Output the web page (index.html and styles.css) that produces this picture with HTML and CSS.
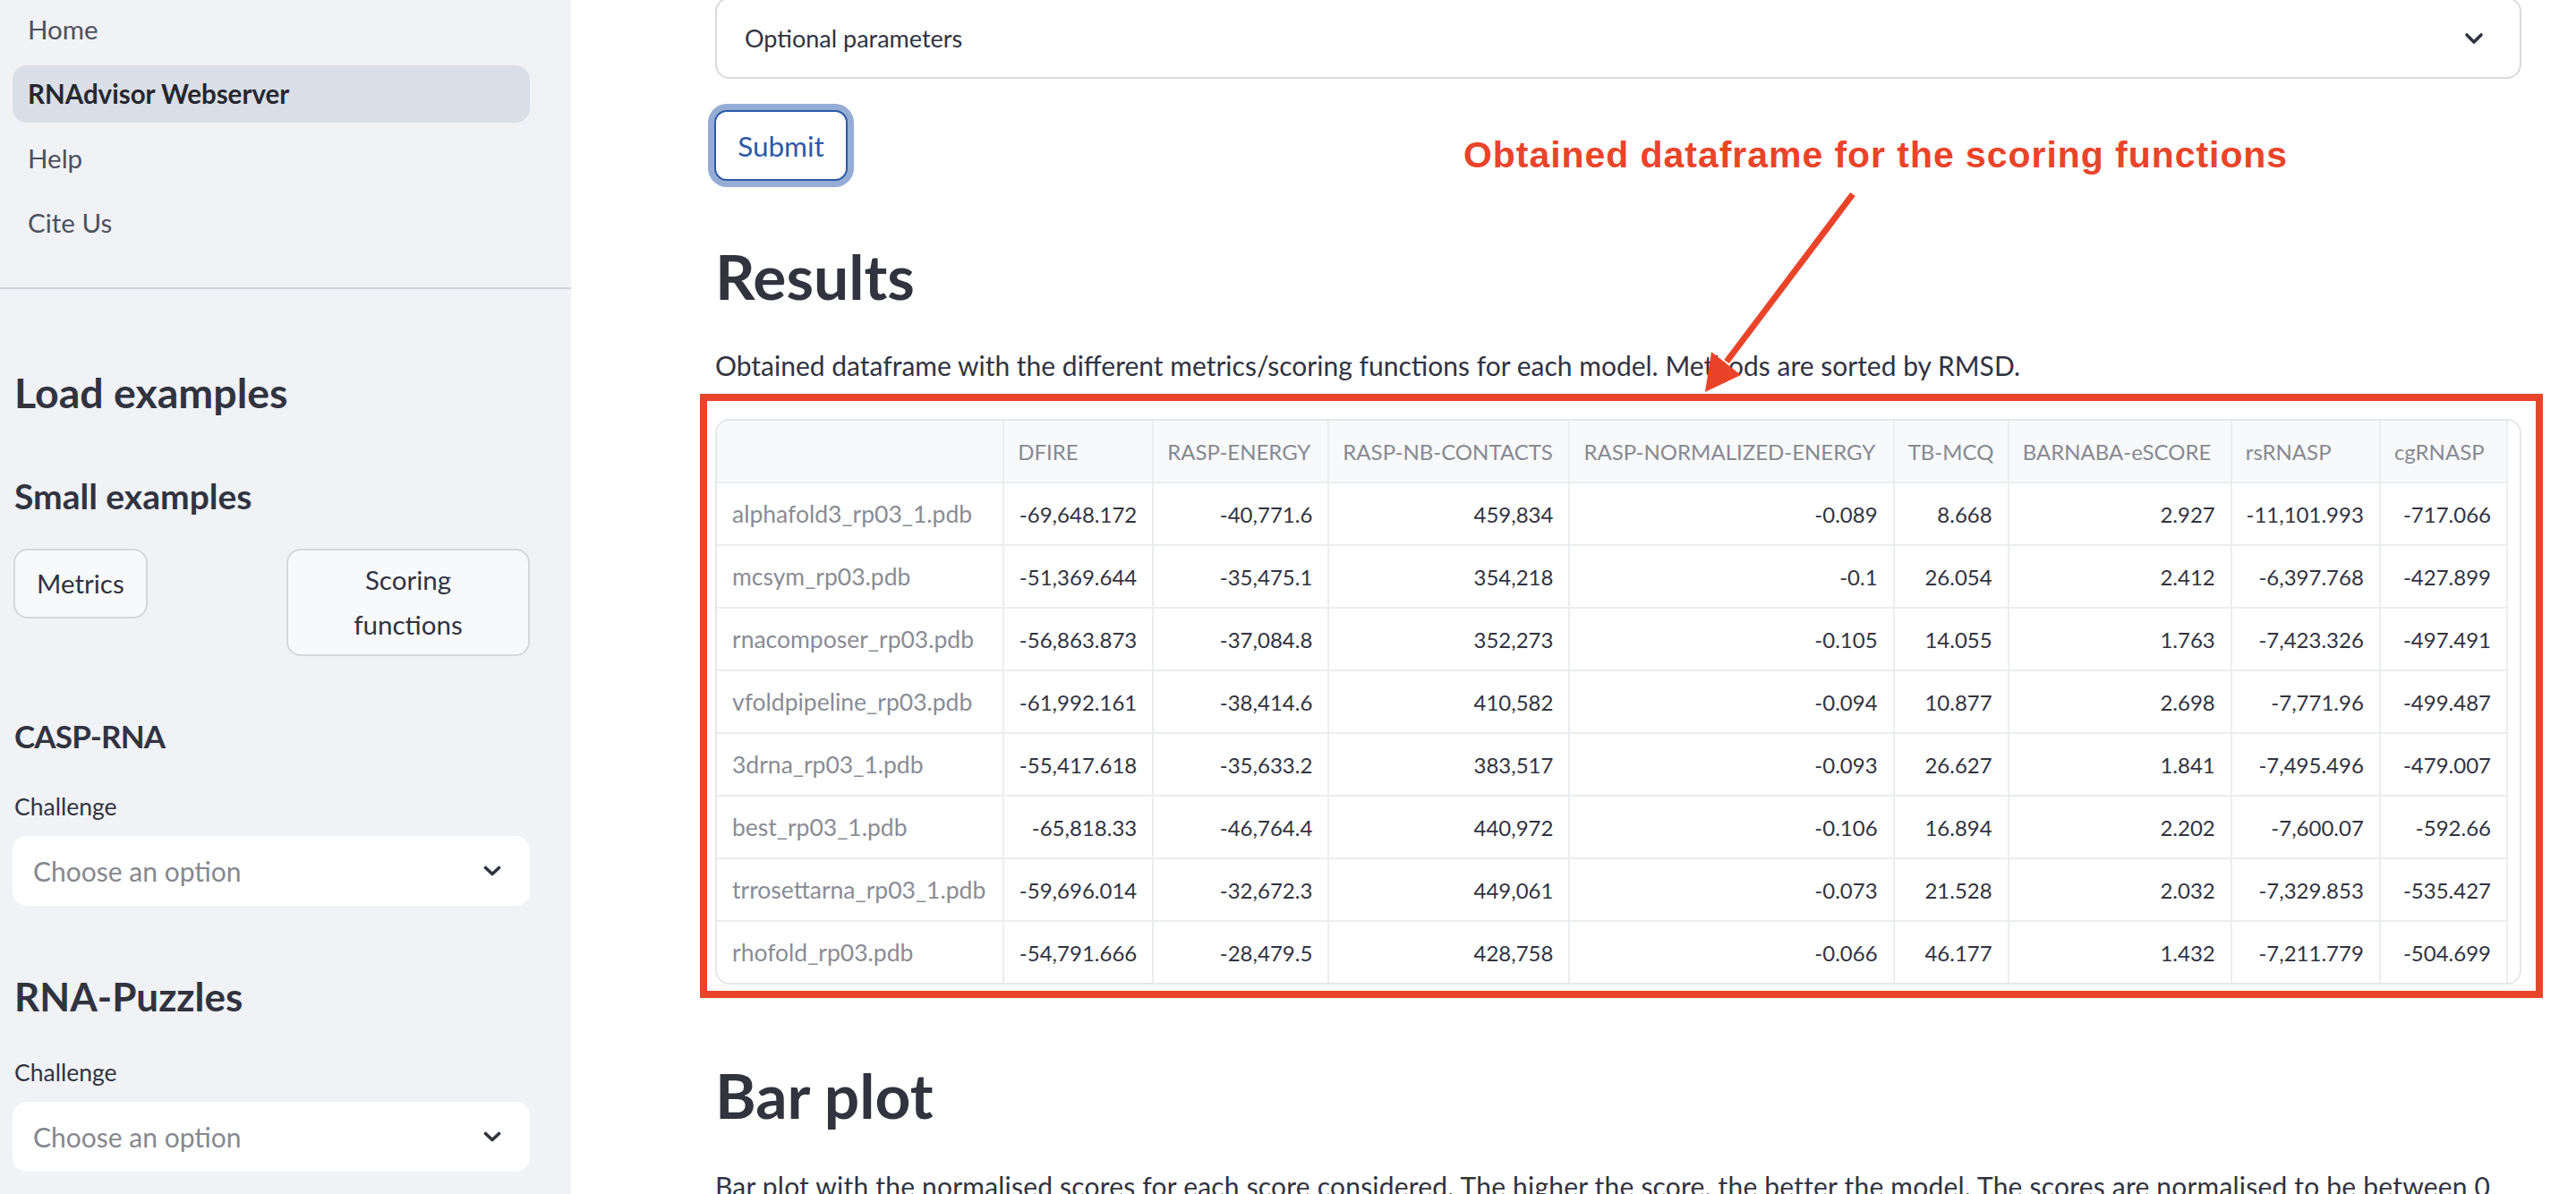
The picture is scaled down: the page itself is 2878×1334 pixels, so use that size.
FILE: index.html
```html
<!DOCTYPE html>
<html lang="en">
<head>
<meta charset="utf-8">
<title>RNAdvisor Webserver</title>
<link rel="stylesheet" href="styles.css">
</head>
<body>
<div class="app">
  <aside class="sidebar">
    <nav class="nav">
      <a class="nav-item">Home</a>
      <a class="nav-item active">RNAdvisor Webserver</a>
      <a class="nav-item">Help</a>
      <a class="nav-item">Cite Us</a>
    </nav>
    <hr class="sep">
    <div class="side-content">
      <h2 class="side-h2">Load examples</h2>
      <h3 class="side-h3">Small examples</h3>
      <div class="btn-cols">
        <div class="btn-col"><button class="side-btn">Metrics</button></div>
        <div class="btn-col"><button class="side-btn wide">Scoring functions</button></div>
      </div>
      <h3 class="side-h3 casp">CASP-RNA</h3>
      <div class="lbl">Challenge</div>
      <div class="select">
        <span class="placeholder">Choose an option</span>
        <svg class="sel-chev" width="20" height="12" viewBox="0 0 20 12"><path d="M2.5 2.5 L10 9.5 L17.5 2.5" fill="none" stroke="#31333f" stroke-width="3.6" stroke-linecap="round" stroke-linejoin="round"/></svg>
      </div>
      <h2 class="side-h2 puzzles">RNA-Puzzles</h2>
      <div class="lbl">Challenge</div>
      <div class="select">
        <span class="placeholder">Choose an option</span>
        <svg class="sel-chev" width="20" height="12" viewBox="0 0 20 12"><path d="M2.5 2.5 L10 9.5 L17.5 2.5" fill="none" stroke="#31333f" stroke-width="3.6" stroke-linecap="round" stroke-linejoin="round"/></svg>
      </div>
    </div>
  </aside>

  <main class="main">
    <div class="expander">
      <span>Optional parameters</span>
      <svg class="exp-chev" width="22" height="14" viewBox="0 0 22 14"><path d="M3 3 L11 11 L19 3" fill="none" stroke="#31333f" stroke-width="3.6" stroke-linecap="round" stroke-linejoin="round"/></svg>
    </div>
    <div class="submit-wrap"><button class="submit">Submit</button></div>

    <h2 class="h-main">Results</h2>
    <p class="para">Obtained dataframe with the different metrics/scoring functions for each model. Methods are sorted by RMSD.</p>

    <div class="table-wrap">
      <table class="df">
        <colgroup>
          <col class="c-idx"><col class="c1"><col class="c2"><col class="c3"><col class="c4"><col class="c5"><col class="c6"><col class="c7"><col class="c8">
        </colgroup>
        <thead>
          <tr><th></th><th>DFIRE</th><th>RASP-ENERGY</th><th>RASP-NB-CONTACTS</th><th>RASP-NORMALIZED-ENERGY</th><th>TB-MCQ</th><th>BARNABA-eSCORE</th><th>rsRNASP</th><th>cgRNASP</th></tr>
        </thead>
        <tbody>
          <tr><td class="idx">alphafold3_rp03_1.pdb</td><td>-69,648.172</td><td>-40,771.6</td><td>459,834</td><td>-0.089</td><td>8.668</td><td>2.927</td><td>-11,101.993</td><td>-717.066</td></tr>
          <tr><td class="idx">mcsym_rp03.pdb</td><td>-51,369.644</td><td>-35,475.1</td><td>354,218</td><td>-0.1</td><td>26.054</td><td>2.412</td><td>-6,397.768</td><td>-427.899</td></tr>
          <tr><td class="idx">rnacomposer_rp03.pdb</td><td>-56,863.873</td><td>-37,084.8</td><td>352,273</td><td>-0.105</td><td>14.055</td><td>1.763</td><td>-7,423.326</td><td>-497.491</td></tr>
          <tr><td class="idx">vfoldpipeline_rp03.pdb</td><td>-61,992.161</td><td>-38,414.6</td><td>410,582</td><td>-0.094</td><td>10.877</td><td>2.698</td><td>-7,771.96</td><td>-499.487</td></tr>
          <tr><td class="idx">3drna_rp03_1.pdb</td><td>-55,417.618</td><td>-35,633.2</td><td>383,517</td><td>-0.093</td><td>26.627</td><td>1.841</td><td>-7,495.496</td><td>-479.007</td></tr>
          <tr><td class="idx">best_rp03_1.pdb</td><td>-65,818.33</td><td>-46,764.4</td><td>440,972</td><td>-0.106</td><td>16.894</td><td>2.202</td><td>-7,600.07</td><td>-592.66</td></tr>
          <tr><td class="idx">trrosettarna_rp03_1.pdb</td><td>-59,696.014</td><td>-32,672.3</td><td>449,061</td><td>-0.073</td><td>21.528</td><td>2.032</td><td>-7,329.853</td><td>-535.427</td></tr>
          <tr><td class="idx">rhofold_rp03.pdb</td><td>-54,791.666</td><td>-28,479.5</td><td>428,758</td><td>-0.066</td><td>46.177</td><td>1.432</td><td>-7,211.779</td><td>-504.699</td></tr>
        </tbody>
      </table>
    </div>

    <h2 class="h-main bar">Bar plot</h2>
    <p class="para bar-p">Bar plot with the normalised scores for each score considered. The higher the score, the better the model. The scores are normalised to be between 0 and 1.</p>
  </main>

  <div class="annot-text">Obtained dataframe for the scoring functions</div>
  <div class="annot-box"></div>
  <svg class="annot-arrow" width="2878" height="1334" viewBox="0 0 2878 1334">
    <line x1="2070" y1="217" x2="1929" y2="404" stroke="#e9442a" stroke-width="7"/>
    <polygon points="1905,438 1912,393 1945,419" fill="#e9442a"/>
  </svg>
</div>
</body>
</html>
```

FILE: styles.css
```css
html, body {
  margin: 0;
  padding: 0;
}
body {
  font-family: Lato, "Noto Sans", sans-serif;
  color: #31333f;
  background: #ffffff;
  overflow: hidden;
}
.app {
  position: relative;
  display: flex;
  width: 2878px;
  height: 1334px;
  overflow: hidden;
}

/* ---------- sidebar ---------- */
.sidebar {
  width: 638px;
  flex: none;
  background: #f0f2f6;
}
.nav {
  display: flex;
  flex-direction: column;
  gap: 8px;
  padding-top: 1px;
}
.nav-item {
  display: block;
  height: 64px;
  line-height: 64px;
  margin: 0 46px 0 14px;
  padding-left: 17px;
  border-radius: 16px;
  font-size: 29.5px;
  color: #4e505b;
}
.nav-item.active {
  background: #dadee6;
  font-weight: 700;
  color: #262730;
}
.sep {
  margin: 40px 0 0;
  border: 0;
  height: 2px;
  background: #d2d4d9;
}
.side-content {
  display: flex;
  flex-direction: column;
  padding: 0 46px 0 16px;
}
.side-h2 {
  margin: 87px 0 0;
  font-size: 46.5px;
  line-height: 56px;
  font-weight: 700;
  color: #31333f;
}
.side-h2.puzzles {
  margin-top: 73px;
  font-size: 44px;
}
.side-h3 {
  margin: 64px 0 0;
  font-size: 39px;
  line-height: 48px;
  font-weight: 700;
  color: #31333f;
}
.side-h3.casp {
  margin-top: 67px;
  font-size: 35px;
  line-height: 44px;
  letter-spacing: -0.8px;
}
.btn-cols {
  display: grid;
  grid-template-columns: 1fr 1fr;
  gap: 32px;
  margin-top: 35px;
  align-items: start;
}
.side-btn {
  display: inline-flex;
  align-items: center;
  justify-content: center;
  min-height: 78px;
  margin-left: -1px;
  padding: 8px 24px;
  font-family: inherit;
  font-size: 29.5px;
  line-height: 50px;
  color: #31333f;
  background: #f8f9fb;
  border: 2px solid #d6d7db;
  border-radius: 16px;
  text-align: center;
}
.side-btn.wide {
  width: 100%;
  margin-left: 0;
  padding: 8px 60px;
}
.lbl {
  margin-top: 40px;
  font-size: 26.5px;
  line-height: 34px;
  color: #31333f;
}
.select {
  display: flex;
  align-items: center;
  justify-content: space-between;
  height: 78px;
  margin: 16px 0 0 -2px;
  padding: 0 32px 0 23px;
  background: #ffffff;
  border-radius: 16px;
}
.placeholder {
  font-size: 30px;
  color: #86888f;
}

/* ---------- main ---------- */
.main {
  flex: 1;
  min-width: 0;
  padding: 0 61px 0 161px;
}
.expander {
  box-sizing: border-box;
  display: flex;
  align-items: center;
  justify-content: space-between;
  height: 91px;
  margin-top: -3px;
  padding: 0 40px 0 31px;
  border: 2px solid #d9dadd;
  border-radius: 16px;
  font-size: 27px;
  color: #31333f;
}
.submit-wrap {
  margin-top: 35px;
}
.submit {
  box-sizing: border-box;
  width: 149px;
  height: 79px;
  margin-left: -1px;
  font-family: inherit;
  font-size: 31.5px;
  color: #2d5ba8;
  background: #ffffff;
  border: 2px solid #2c5aa6;
  border-radius: 14px;
  box-shadow: 0 0 0 7px #95acd5;
}
.h-main {
  margin: 66px 0 0;
  font-size: 69.5px;
  line-height: 80px;
  font-weight: 700;
  color: #31333f;
}
.h-main.bar {
  margin-top: 83px;
}
.para {
  margin: 36px 0 0;
  font-size: 30px;
  line-height: 48px;
  color: #31333f;
}
.para.bar-p {
  margin-top: 38px;
  letter-spacing: 0.2px;
}

/* ---------- dataframe ---------- */
.table-wrap {
  box-sizing: border-box;
  height: 632px;
  margin-top: 36px;
  border: 2px solid #e6e7ea;
  border-radius: 16px;
  overflow: hidden;
}
.df {
  table-layout: fixed;
  width: 2001px;
  border-collapse: separate;
  border-spacing: 0;
  font-size: 24px;
}
.c-idx { width: 321px; }
.c1 { width: 167px; }
.c2 { width: 196px; }
.c3 { width: 269px; }
.c4 { width: 362px; }
.c5 { width: 128px; }
.c6 { width: 249px; }
.c7 { width: 166px; }
.c8 { width: 142px; }
.df th,
.df td {
  box-sizing: border-box;
  border-right: 2px solid #ecedf0;
  border-bottom: 2px solid #ecedf0;
  white-space: nowrap;
  overflow: hidden;
}
.df th {
  height: 70px;
  padding: 0 0 0 15px;
  background: #f8f9fb;
  color: #878991;
  font-weight: 400;
  text-align: left;
}
.df td {
  height: 70px;
  padding: 0 17px 0 0;
  text-align: right;
  color: #31333f;
}
.df td.idx {
  padding: 0 0 0 17px;
  font-size: 26.5px;
  text-align: left;
  color: #8a8c94;
}

/* ---------- annotation overlay ---------- */
.annot-text {
  position: absolute;
  left: 1635px;
  top: 153px;
  font-family: "Liberation Sans", Arial, sans-serif;
  font-weight: 700;
  font-size: 41px;
  line-height: 41px;
  letter-spacing: 0.95px;
  color: #e9442a;
  white-space: nowrap;
}
.annot-box {
  position: absolute;
  left: 782px;
  top: 440px;
  width: 2059px;
  height: 675px;
  box-sizing: border-box;
  border: 8px solid #e9442a;
}
.annot-arrow {
  position: absolute;
  left: 0;
  top: 0;
  pointer-events: none;
}
```
